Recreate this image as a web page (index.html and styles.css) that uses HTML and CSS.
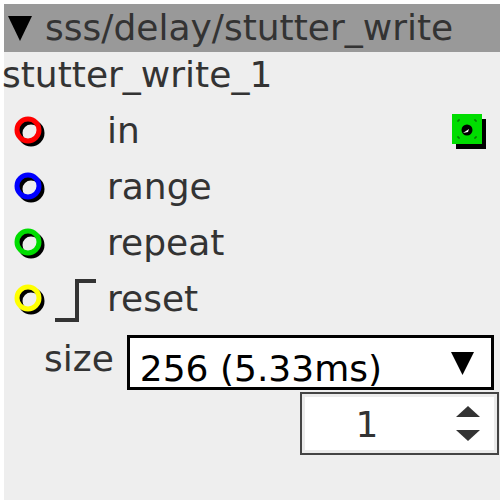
FILE: index.html
```html
<!DOCTYPE html>
<html lang="en">
  <head>
    <meta charset="UTF-8" />
    <title>sss/delay/stutter_write</title>
    <link rel="stylesheet" href="styles.css">
  </head>
  <body>
    <div class="node">
      <div class="title">
        <svg class="collapse" width="24" height="26" viewBox="0 0 24 26"><polygon points="0,0 24,0 12,25" fill="#000" /></svg>
        <span>sss/delay/stutter_write</span>
      </div>
      <div class="name">stutter_write_1</div>

      <div class="port">
        <svg class="jack" width="34" height="34" viewBox="0 0 34 34">
          <circle cx="19" cy="19" r="11" fill="none" stroke="#000" stroke-width="5" />
          <circle cx="16" cy="16" r="11" fill="none" stroke="#ff0000" stroke-width="5" />
        </svg>
        <span class="trig"></span>
        <span class="label">in</span>
        <svg class="out" width="36" height="36" viewBox="0 0 36 36">
          <rect x="4" y="5" width="30" height="30" fill="#000" />
          <rect x="0" y="0" width="30" height="30" fill="#00dd00" />
          <path d="M6 8 V6 H8 M22 6 H24 V8 M24 22 V24 H22 M8 24 H6 V22" fill="none" stroke="#0a5a0a" stroke-width="1" />
          <circle cx="15" cy="16" r="5.5" fill="#000" />
          <path d="M11 19 L17 15 L16 18 Z" fill="#fff" />
        </svg>
      </div>

      <div class="port">
        <svg class="jack" width="34" height="34" viewBox="0 0 34 34">
          <circle cx="19" cy="19" r="11" fill="none" stroke="#000" stroke-width="5" />
          <circle cx="16" cy="16" r="11" fill="none" stroke="#0000ff" stroke-width="5" />
        </svg>
        <span class="trig"></span>
        <span class="label">range</span>
      </div>

      <div class="port">
        <svg class="jack" width="34" height="34" viewBox="0 0 34 34">
          <circle cx="19" cy="19" r="11" fill="none" stroke="#000" stroke-width="5" />
          <circle cx="16" cy="16" r="11" fill="none" stroke="#00dd00" stroke-width="5" />
        </svg>
        <span class="trig"></span>
        <span class="label">repeat</span>
      </div>

      <div class="port">
        <svg class="jack" width="34" height="34" viewBox="0 0 34 34">
          <circle cx="19" cy="19" r="11" fill="none" stroke="#000" stroke-width="5" />
          <circle cx="16" cy="16" r="11" fill="none" stroke="#ffff00" stroke-width="5" />
        </svg>
        <svg class="trig" width="44" height="46" viewBox="0 0 44 46">
          <path d="M1 44 H23 V5 H42" fill="none" stroke="#333" stroke-width="4" />
        </svg>
        <span class="label">reset</span>
      </div>

      <div class="param">
        <span class="param-label">size</span>
        <div class="select">
          <span>256 (5.33ms)</span>
          <svg width="24" height="24" viewBox="0 0 24 24"><polygon points="0,0 23,0 11.5,23" fill="#000" /></svg>
        </div>
      </div>

      <div class="spin-row">
        <div class="spin">
          <span class="spin-value">1</span>
          <svg class="arrows" width="26" height="36" viewBox="0 0 26 36">
            <polygon points="13,0 25,11 1,11" fill="#333" />
            <polygon points="1,24 25,24 13,35" fill="#333" />
          </svg>
        </div>
      </div>
    </div>
  </body>
</html>
```

FILE: styles.css
```css
body {
  margin: 0;
  padding: 4px;
  background: #fff;
  font-family: "DejaVu Sans", sans-serif;
  font-size: 36px;
  color: #333;
}
.node {
  width: 496px;
  height: 496px;
  background: #eeeeee;
}
.title {
  height: 48px;
  line-height: 48px;
  background: #999999;
  display: flex;
  align-items: center;
  white-space: nowrap;
}
.collapse {
  margin-left: 4px;
  margin-right: 13px;
  margin-top: 2px;
}
.name {
  height: 45px;
  line-height: 45px;
  padding-bottom: 6px;
  margin-left: -2px;
}
.port {
  height: 56px;
  display: flex;
  align-items: center;
  padding-left: 8px;
  padding-right: 12px;
}
.jack {
  flex: none;
}
.trig {
  width: 44px;
  height: 46px;
  margin-left: 8px;
  flex: none;
}
.label {
  margin-left: 9px;
  line-height: 42px;
}
.out {
  margin-left: auto;
  margin-top: 2px;
}
/* parameter widgets */
.param {
  display: flex;
  align-items: flex-start;
  padding-left: 40px;
}
.param-label {
  line-height: 42px;
  margin-top: 11px;
  margin-right: 13px;
}
.select {
  margin-top: 8px;
  height: 49px;
  border: 3px solid #000;
  background: #fff;
  color: #000;
  display: flex;
  align-items: flex-start;
  justify-content: space-between;
  padding-left: 10px;
  padding-right: 16px;
  width: 335px;
}
.select span {
  line-height: 37px;
  padding-top: 12px;
}
.select svg {
  margin-top: 14px;
}
.spin-row {
  display: flex;
  justify-content: flex-end;
  padding-right: 1px;
  margin-top: 2px;
}
.spin {
  width: 195px;
  height: 59px;
  border: 2px solid #444;
  background: #fff;
  box-shadow: inset 0 0 0 3px #ebebeb;
  display: flex;
  align-items: center;
}
.spin-value {
  width: 130px;
  text-align: center;
  line-height: 42px;
  margin-top: 2px;
}
.arrows {
  margin-left: 23px;
  margin-top: 1px;
}
```
